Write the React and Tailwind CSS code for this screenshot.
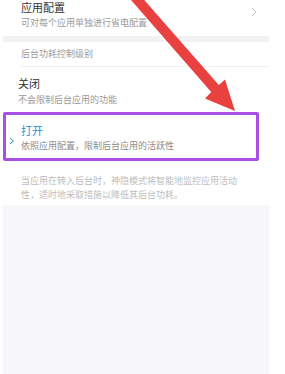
export default function App() {
  return (
    <div
      className="relative w-[285px] h-[374px] overflow-hidden bg-white"
      style={{ fontFamily: '"Noto Sans CJK SC", "Noto Sans", sans-serif' }}
    >
      <div className="ml-[3px] w-[266px] flex flex-col">
        {/* app config row */}
        <div className="h-[36px] pl-[18px] pr-[12px] flex items-start justify-between">
          <div className="flex flex-col">
            <span className="text-[11px] leading-[14px] text-[#333]">应用配置</span>
            <span className="text-[9px] leading-[12px] text-[#9a9a9a] mt-[3px]">可对每个应用单独进行省电配置</span>
          </div>
          <svg width="6" height="10" viewBox="0 0 6 10" className="mt-[7px]">
            <path d="M1 1 L5 5 L1 9" fill="none" stroke="#c4c4c4" strokeWidth="1" />
          </svg>
        </div>

        <div className="h-[6px] bg-[#f2f2f3]" />

        {/* section header */}
        <div className="h-[24px] pl-[18px] flex items-center">
          <span className="text-[9px] leading-[12px] text-[#9a9a9a]">后台功耗控制级别</span>
        </div>
        <div className="ml-[18px] h-px bg-[#efefef]" />

        {/* off option */}
        <div className="h-[45px] pl-[15px] flex flex-col pt-[9px]">
          <span className="text-[11px] leading-[14px] text-[#333]">关闭</span>
          <span className="text-[9px] leading-[12px] text-[#999] mt-[4px]">不会限制后台应用的功能</span>
        </div>

        {/* on option, highlighted */}
        <div className="w-[256px] h-[49px] border-[3px] border-[#a94fe4] rounded-[2px] flex items-center">
          <svg width="6" height="8" viewBox="0 0 6 8" className="ml-[3px] mt-[9px]">
            <path d="M1 1 L4.5 4 L1 7" fill="none" stroke="#3a8fdc" strokeWidth="1" />
          </svg>
          <div className="flex flex-col ml-[6px] mt-[1px]">
            <span className="text-[11px] leading-[14px] text-[#2f8ad8]">打开</span>
            <span className="text-[9px] leading-[12px] text-[#8c8c8c] mt-[3px]">依照应用配置，限制后台应用的活跃性</span>
          </div>
        </div>

        {/* description */}
        <div className="h-[44px] pl-[18px] pr-[30px] pt-[13px]">
          <p className="text-[9px] leading-[14px] text-[#bdbdbd]">
            当应用在转入后台时，神隐模式将智能地监控应用活动性，适时地采取措施以降低其后台功耗。
          </p>
        </div>

        <div className="h-[169px] bg-[#f7f6f8]" />
      </div>

      {/* red annotation arrow */}
      <svg className="absolute left-0 top-0" width="285" height="374" viewBox="0 0 285 374">
        <polygon
          points="139,-6 131,0 211.2,92 205,98.5 235,111 225,79.5 218.8,85"
          fill="#e8413f"
        />
      </svg>
    </div>
  );
}
